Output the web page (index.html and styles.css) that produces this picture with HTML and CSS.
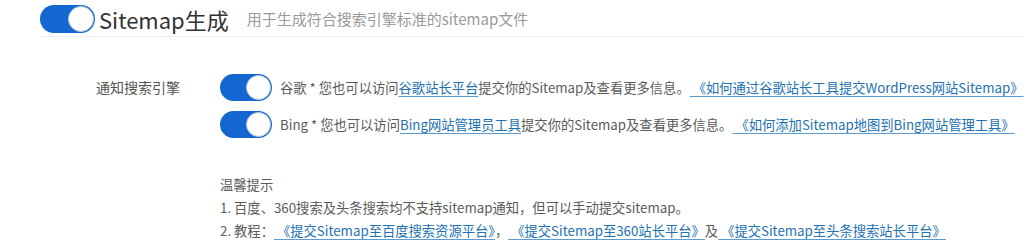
FILE: index.html
```html
<!DOCTYPE html>
<html lang="zh-CN">
<head>
<meta charset="utf-8">
<title>Sitemap生成</title>
<link rel="stylesheet" href="styles.css">
</head>
<body>
<div class="header">
  <span class="switch switch-lg"><span class="knob"></span></span>
  <span class="title">Sitemap生成</span>
  <span class="subtitle">用于生成符合搜索引擎标准的sitemap文件</span>
</div>
<div class="section">
  <div class="label">通知搜索引擎</div>
  <div class="content">
    <div class="row">
      <span class="switch"><span class="knob"></span></span>
      <span class="text">谷歌 * 您也可以访问<a href="#">谷歌站长平台</a>提交你的Sitemap及查看更多信息。<a href="#">&nbsp;《如何通过谷歌站长工具提交WordPress网站Sitemap》</a></span>
    </div>
    <div class="row">
      <span class="switch"><span class="knob"></span></span>
      <span class="text">Bing * 您也可以访问<a href="#">Bing网站管理员工具</a>提交你的Sitemap及查看更多信息。<a href="#">&nbsp;《如何添加Sitemap地图到Bing网站管理工具》</a></span>
    </div>
    <div class="notes">
      <div>温馨提示</div>
      <div>1. 百度、360搜索及头条搜索均不支持sitemap通知，但可以手动提交sitemap。</div>
      <div>2. 教程：<a href="#">&nbsp;《提交Sitemap至百度搜索资源平台》</a>，<a href="#">&nbsp;《提交Sitemap至360站长平台》</a>及<a href="#">&nbsp;《提交Sitemap至头条搜索站长平台》</a></div>
    </div>
  </div>
</div>
</body>
</html>
```
FILE: styles.css
```css
html, body {
  margin: 0;
  padding: 0;
  background: #ffffff;
}
body {
  font-family: "Noto Sans CJK SC", "Noto Sans", sans-serif;
  color: #5a5a5a;
}
.header {
  display: flex;
  align-items: center;
  margin-left: 40px;
  padding-top: 5px;
  padding-bottom: 3px;
  border-bottom: 1px solid #f0f0f1;
}
.switch {
  position: relative;
  display: inline-block;
  flex: none;
  width: 52px;
  height: 27px;
  border-radius: 14px;
  background: #1466d1;
}
.switch-lg {
  width: 55px;
  height: 28px;
}
.knob {
  position: absolute;
  top: 1px;
  right: 1px;
  width: 23px;
  height: 23px;
  border-radius: 50%;
  background: #ffffff;
  border: 1px solid #b9c7da;
}
.switch-lg .knob {
  width: 24px;
  height: 24px;
}
.title {
  margin-left: 4px;
  font-size: 22px;
  color: #333333;
  line-height: 28px;
}
.subtitle {
  margin-left: 18px;
  font-size: 15px;
  color: #999999;
  line-height: 28px;
}
.section {
  display: grid;
  grid-template-columns: 180px 1fr;
  column-gap: 40px;
  margin-top: 37px;
}
.label {
  text-align: right;
  font-size: 14px;
  line-height: 27px;
  color: #555555;
}
.row {
  display: flex;
  align-items: center;
  column-gap: 8px;
  height: 27px;
  font-size: 13.3px;
  white-space: nowrap;
}
.row + .row {
  margin-top: 10px;
}
a {
  color: #2271b1;
  text-decoration: underline;
  text-decoration-color: #5b9bd0;
  text-underline-offset: 3px;
}
.notes {
  margin-top: 35px;
  font-size: 13.3px;
  line-height: 23px;
  color: #5a5a5a;
  white-space: nowrap;
}
```
